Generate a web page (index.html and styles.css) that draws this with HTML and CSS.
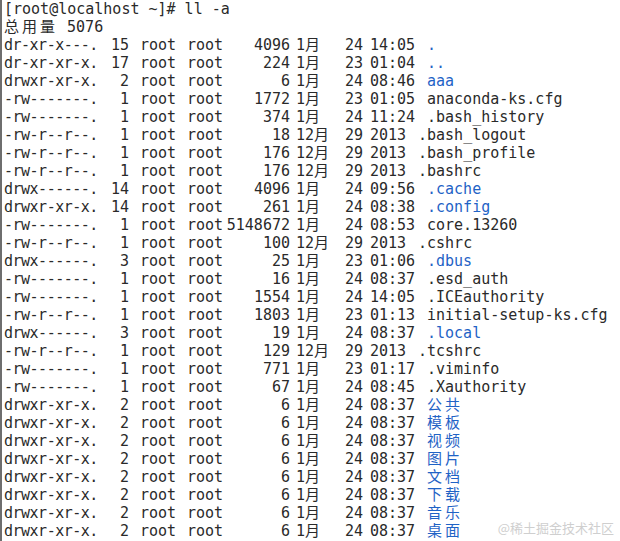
FILE: index.html
```html
<!DOCTYPE html>
<html lang="zh">
<head>
<meta charset="utf-8">
<link rel="stylesheet" href="styles.css">
</head>
<body>
<div class="term">
  <div class="line">[root@localhost ~]# ll -a</div>
  <div class="line"><span class="cjk">总用量</span> 5076</div>

  <div class="row"><span class="perm">dr-xr-x---.</span><span class="lnk">15</span><span class="own">root</span><span class="grp">root</span><span class="size">4096</span><span class="mon">1月</span><span class="day">24</span><span class="time">14:05</span><span class="name dir">.</span></div>
  <div class="row"><span class="perm">dr-xr-xr-x.</span><span class="lnk">17</span><span class="own">root</span><span class="grp">root</span><span class="size">224</span><span class="mon">1月</span><span class="day">23</span><span class="time">01:04</span><span class="name dir">..</span></div>
  <div class="row"><span class="perm">drwxr-xr-x.</span><span class="lnk">2</span><span class="own">root</span><span class="grp">root</span><span class="size">6</span><span class="mon">1月</span><span class="day">24</span><span class="time">08:46</span><span class="name dir">aaa</span></div>
  <div class="row"><span class="perm">-rw-------.</span><span class="lnk">1</span><span class="own">root</span><span class="grp">root</span><span class="size">1772</span><span class="mon">1月</span><span class="day">23</span><span class="time">01:05</span><span class="name">anaconda-ks.cfg</span></div>
  <div class="row"><span class="perm">-rw-------.</span><span class="lnk">1</span><span class="own">root</span><span class="grp">root</span><span class="size">374</span><span class="mon">1月</span><span class="day">24</span><span class="time">11:24</span><span class="name">.bash_history</span></div>
  <div class="row"><span class="perm">-rw-r--r--.</span><span class="lnk">1</span><span class="own">root</span><span class="grp">root</span><span class="size">18</span><span class="mon">12月</span><span class="day">29</span><span class="time">2013</span><span class="name yr">.bash_logout</span></div>
  <div class="row"><span class="perm">-rw-r--r--.</span><span class="lnk">1</span><span class="own">root</span><span class="grp">root</span><span class="size">176</span><span class="mon">12月</span><span class="day">29</span><span class="time">2013</span><span class="name yr">.bash_profile</span></div>
  <div class="row"><span class="perm">-rw-r--r--.</span><span class="lnk">1</span><span class="own">root</span><span class="grp">root</span><span class="size">176</span><span class="mon">12月</span><span class="day">29</span><span class="time">2013</span><span class="name yr">.bashrc</span></div>
  <div class="row"><span class="perm">drwx------.</span><span class="lnk">14</span><span class="own">root</span><span class="grp">root</span><span class="size">4096</span><span class="mon">1月</span><span class="day">24</span><span class="time">09:56</span><span class="name dir">.cache</span></div>
  <div class="row"><span class="perm">drwxr-xr-x.</span><span class="lnk">14</span><span class="own">root</span><span class="grp">root</span><span class="size">261</span><span class="mon">1月</span><span class="day">24</span><span class="time">08:38</span><span class="name dir">.config</span></div>
  <div class="row"><span class="perm">-rw-------.</span><span class="lnk">1</span><span class="own">root</span><span class="grp">root</span><span class="size">5148672</span><span class="mon">1月</span><span class="day">24</span><span class="time">08:53</span><span class="name">core.13260</span></div>
  <div class="row"><span class="perm">-rw-r--r--.</span><span class="lnk">1</span><span class="own">root</span><span class="grp">root</span><span class="size">100</span><span class="mon">12月</span><span class="day">29</span><span class="time">2013</span><span class="name yr">.cshrc</span></div>
  <div class="row"><span class="perm">drwx------.</span><span class="lnk">3</span><span class="own">root</span><span class="grp">root</span><span class="size">25</span><span class="mon">1月</span><span class="day">23</span><span class="time">01:06</span><span class="name dir">.dbus</span></div>
  <div class="row"><span class="perm">-rw-------.</span><span class="lnk">1</span><span class="own">root</span><span class="grp">root</span><span class="size">16</span><span class="mon">1月</span><span class="day">24</span><span class="time">08:37</span><span class="name">.esd_auth</span></div>
  <div class="row"><span class="perm">-rw-------.</span><span class="lnk">1</span><span class="own">root</span><span class="grp">root</span><span class="size">1554</span><span class="mon">1月</span><span class="day">24</span><span class="time">14:05</span><span class="name">.ICEauthority</span></div>
  <div class="row"><span class="perm">-rw-r--r--.</span><span class="lnk">1</span><span class="own">root</span><span class="grp">root</span><span class="size">1803</span><span class="mon">1月</span><span class="day">23</span><span class="time">01:13</span><span class="name">initial-setup-ks.cfg</span></div>
  <div class="row"><span class="perm">drwx------.</span><span class="lnk">3</span><span class="own">root</span><span class="grp">root</span><span class="size">19</span><span class="mon">1月</span><span class="day">24</span><span class="time">08:37</span><span class="name dir">.local</span></div>
  <div class="row"><span class="perm">-rw-r--r--.</span><span class="lnk">1</span><span class="own">root</span><span class="grp">root</span><span class="size">129</span><span class="mon">12月</span><span class="day">29</span><span class="time">2013</span><span class="name yr">.tcshrc</span></div>
  <div class="row"><span class="perm">-rw-------.</span><span class="lnk">1</span><span class="own">root</span><span class="grp">root</span><span class="size">771</span><span class="mon">1月</span><span class="day">23</span><span class="time">01:17</span><span class="name">.viminfo</span></div>
  <div class="row"><span class="perm">-rw-------.</span><span class="lnk">1</span><span class="own">root</span><span class="grp">root</span><span class="size">67</span><span class="mon">1月</span><span class="day">24</span><span class="time">08:45</span><span class="name">.Xauthority</span></div>
  <div class="row"><span class="perm">drwxr-xr-x.</span><span class="lnk">2</span><span class="own">root</span><span class="grp">root</span><span class="size">6</span><span class="mon">1月</span><span class="day">24</span><span class="time">08:37</span><span class="name dir cjk">公共</span></div>
  <div class="row"><span class="perm">drwxr-xr-x.</span><span class="lnk">2</span><span class="own">root</span><span class="grp">root</span><span class="size">6</span><span class="mon">1月</span><span class="day">24</span><span class="time">08:37</span><span class="name dir cjk">模板</span></div>
  <div class="row"><span class="perm">drwxr-xr-x.</span><span class="lnk">2</span><span class="own">root</span><span class="grp">root</span><span class="size">6</span><span class="mon">1月</span><span class="day">24</span><span class="time">08:37</span><span class="name dir cjk">视频</span></div>
  <div class="row"><span class="perm">drwxr-xr-x.</span><span class="lnk">2</span><span class="own">root</span><span class="grp">root</span><span class="size">6</span><span class="mon">1月</span><span class="day">24</span><span class="time">08:37</span><span class="name dir cjk">图片</span></div>
  <div class="row"><span class="perm">drwxr-xr-x.</span><span class="lnk">2</span><span class="own">root</span><span class="grp">root</span><span class="size">6</span><span class="mon">1月</span><span class="day">24</span><span class="time">08:37</span><span class="name dir cjk">文档</span></div>
  <div class="row"><span class="perm">drwxr-xr-x.</span><span class="lnk">2</span><span class="own">root</span><span class="grp">root</span><span class="size">6</span><span class="mon">1月</span><span class="day">24</span><span class="time">08:37</span><span class="name dir cjk">下载</span></div>
  <div class="row"><span class="perm">drwxr-xr-x.</span><span class="lnk">2</span><span class="own">root</span><span class="grp">root</span><span class="size">6</span><span class="mon">1月</span><span class="day">24</span><span class="time">08:37</span><span class="name dir cjk">音乐</span></div>
  <div class="row"><span class="perm">drwxr-xr-x.</span><span class="lnk">2</span><span class="own">root</span><span class="grp">root</span><span class="size">6</span><span class="mon">1月</span><span class="day">24</span><span class="time">08:37</span><span class="name dir cjk">桌面</span></div>

  <div class="watermark">@稀土掘金技术社区</div>
</div>
</body>
</html>
```

FILE: styles.css
```css
html, body {
  margin: 0;
  padding: 0;
  background: #ffffff;
}

.term {
  position: relative;
  width: 620px;
  height: 541px;
  box-sizing: border-box;
  border-left: 2px solid #6e6e6e;
  padding-left: 2px;
  font-family: "DejaVu Sans Mono", "Noto Sans CJK SC", monospace;
  font-size: 15px;
  line-height: 18px;
  color: #2a2a2a;
  overflow: hidden;
}

.line {
  height: 18px;
  white-space: pre;
}

.line .cjk {
  letter-spacing: 3px;
}

.row {
  display: grid;
  grid-template-columns: 104px 21px 58px 39px 64px 55px 25px 57px 1fr;
  height: 18px;
  white-space: pre;
}

.perm {
  letter-spacing: -0.5px;
}

.lnk {
  text-align: right;
}

.own {
  padding-left: 11px;
}

.size {
  text-align: right;
}

.mon {
  padding-left: 6px;
}

.name.yr {
  margin-left: -9px;
}

.dir {
  color: #1f63c6;
}

.name.cjk {
  letter-spacing: 3px;
}

.watermark {
  position: absolute;
  right: 6px;
  bottom: 4px;
  font-family: "Noto Sans CJK SC", sans-serif;
  font-size: 13px;
  line-height: 18px;
  color: #cfcfcf;
}
```
